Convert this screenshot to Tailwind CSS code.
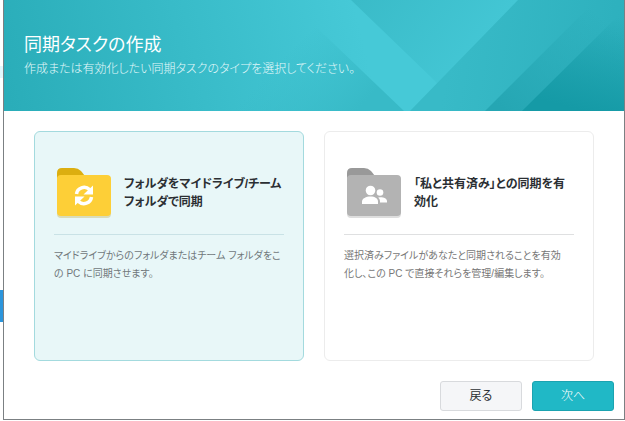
<!DOCTYPE html>
<html lang="ja">
<head>
  <meta charset="UTF-8">
  <meta name="viewport" content="width=device-width, initial-scale=1">
  <title>同期タスクの作成</title>
  <script src="https://cdn.jsdelivr.net/npm/@tailwindcss/browser@4"></script>
</head>
<body class="relative min-h-screen flex flex-col bg-white pl-[3px] pb-px font-['Liberation_Sans','Noto_Sans_CJK_JP',sans-serif] [font-feature-settings:'palt']">

  <!-- Window behind the dialog -->
  <div class="absolute left-0 top-[290px] w-[3px] h-8 bg-[#2b95dc]"></div>
  <div class="absolute left-0 top-[66px] w-[3px] h-3 bg-[#e2f7fc]"></div>

  <div class="relative flex-1 flex flex-col border border-t-0 border-[#7b8083] bg-white">

    <!-- Header -->
    <header class="relative h-[111px] shrink-0 px-5 pt-[33px] text-white">
      <svg class="absolute inset-0 w-full h-full" viewBox="0 0 620 111" preserveAspectRatio="none" aria-hidden="true">
        <defs>
          <linearGradient id="base" gradientUnits="userSpaceOnUse" x1="0" y1="80" x2="350" y2="0">
            <stop offset="0" stop-color="#2aadb9"/>
            <stop offset="1" stop-color="#46c9d7"/>
          </linearGradient>
          <linearGradient id="left" gradientUnits="userSpaceOnUse" x1="310" y1="25" x2="375" y2="87">
            <stop offset="0" stop-color="#38bac7" stop-opacity="0"/>
            <stop offset="1" stop-color="#38bac7"/>
          </linearGradient>
          <linearGradient id="mid" gradientUnits="userSpaceOnUse" x1="350" y1="0" x2="450" y2="80">
            <stop offset="0" stop-color="#3abbc8"/>
            <stop offset="1" stop-color="#43c6d4"/>
          </linearGradient>
          <linearGradient id="right" gradientUnits="userSpaceOnUse" x1="450" y1="30" x2="620" y2="60">
            <stop offset="0" stop-color="#38bac7"/>
            <stop offset="1" stop-color="#2db0bd"/>
          </linearGradient>
          <linearGradient id="dark" gradientUnits="userSpaceOnUse" x1="590" y1="10" x2="500" y2="111">
            <stop offset="0" stop-color="#25a6b3" stop-opacity="0"/>
            <stop offset="1" stop-color="#25a6b3"/>
          </linearGradient>
          <linearGradient id="corner" gradientUnits="userSpaceOnUse" x1="605" y1="15" x2="580" y2="111">
            <stop offset="0" stop-color="#159aa6" stop-opacity="0"/>
            <stop offset="1" stop-color="#159aa6"/>
          </linearGradient>
        </defs>
        <rect width="620" height="111" fill="url(#base)"/>
        <path d="M284 0 400 111H150V0Z" fill="url(#left)"/>
        <path d="M347 0H620V111H460L430 80Z" fill="url(#mid)"/>
        <path d="M514 0H620V111H406Z" fill="url(#right)"/>
        <path d="M592 0H620V111H481Z" fill="url(#dark)"/>
        <path d="M620 10V111H518Z" fill="url(#corner)"/>
      </svg>
      <h1 class="relative text-[18px] leading-6">同期タスクの作成</h1>
      <p class="relative text-[12px] leading-6 font-light text-[#e3f8fa]">作成または有効化したい同期タスクのタイプを選択してください。</p>
    </header>

    <form class="flex-1 flex flex-col px-[10px] pb-2">
      <!-- Task types -->
      <div class="grid grid-cols-2 gap-5 px-5 pt-5">
        <label class="relative h-[230px] px-[19px] pt-9 rounded-md border border-[#ececec] has-checked:border-[#a3dade] has-checked:bg-[#e8f7f8]">
          <input type="radio" name="task" value="drive" class="sr-only" checked>
          <span class="flex items-center gap-3 h-[50px]">
            <svg class="w-14 h-[52px] shrink-0 ml-[2px]" viewBox="0 0 56 52" aria-hidden="true">
              <path d="M1 6Q1 1 6 1H18Q22 1 25 4L29 9V16H1Z" fill="#dcae10"/>
              <rect x="1" y="9" width="54" height="42" rx="4" fill="#d9dcb8"/>
              <rect x="1" y="8" width="54" height="41" rx="4" fill="#fdcf37"/>
              <g fill="none" stroke="#fff" stroke-width="3.500">
                <path d="M20.500 27A7.700 7.500 0 0 1 33.500 22.500"/>
                <path d="M35.500 30A7.700 7.500 0 0 1 22.500 34.500"/>
              </g>
              <path d="M37 18.500V27.500H27.500Z" fill="#fff"/>
              <path d="M19 38.500V29.500H28.500Z" fill="#fff"/>
            </svg>
            <span class="text-[12px] leading-[18px] font-bold text-[#2b2f33]">フォルダをマイドライブ/チーム<br>フォルダで同期</span>
          </span>
          <span class="block mt-4 pt-3 border-t border-[#c9e2e6] text-[10px] leading-[18px] text-[#70787b]">マイドライブからのフォルダまたはチーム フォルダをこ<br>の PC に同期させます。</span>
        </label>

        <label class="relative h-[230px] px-[19px] pt-9 rounded-md border border-[#ececec] has-checked:border-[#a3dade] has-checked:bg-[#e8f7f8]">
          <input type="radio" name="task" value="shared" class="sr-only">
          <span class="flex items-center gap-3 h-[50px]">
            <svg class="w-14 h-[52px] shrink-0 ml-[2px]" viewBox="0 0 56 52" aria-hidden="true">
              <path d="M1 6Q1 1 6 1H18Q22 1 25 4L29 9V16H1Z" fill="#999"/>
              <rect x="1" y="9" width="54" height="42" rx="4" fill="#dedede"/>
              <rect x="1" y="8" width="54" height="41" rx="4" fill="#b3b3b3"/>
              <g fill="#fff">
                <circle cx="24.500" cy="23.500" r="4.800"/>
                <path d="M16 37V34.500C16 31.500 20 29.500 24.500 29.500S32 31.500 32 34.500V37Z"/>
                <circle cx="34" cy="25.500" r="3.300"/>
                <path d="M34 35.500H41V34C41 31.500 37.500 30 34 30.200L32.200 30.500Q34 32.300 34 34Z"/>
              </g>
            </svg>
            <span class="text-[12px] leading-[18px] font-bold text-[#2b2f33]">「私と共有済み」との同期を有<br>効化</span>
          </span>
          <span class="block mt-4 pt-3 border-t border-[#dfe0e1] text-[10px] leading-[18px] text-[#777]">選択済みファイルがあなたと同期されることを有効<br>化し、この PC で直接それらを管理/編集します。</span>
        </label>
      </div>

      <!-- Buttons -->
      <div class="mt-auto flex justify-end gap-[10px]">
        <button type="button" class="w-[82px] h-[30px] rounded-[3px] border border-[#d8dadd] bg-[#f5f6f8] text-[12px] text-[#2b2f33]">戻る</button>
        <button type="submit" class="w-[82px] h-[30px] rounded-[3px] border border-[#1ba3b0] bg-[#20b8c6] text-[12px] font-light text-white">次へ</button>
      </div>
    </form>
  </div>

</body>
</html>
